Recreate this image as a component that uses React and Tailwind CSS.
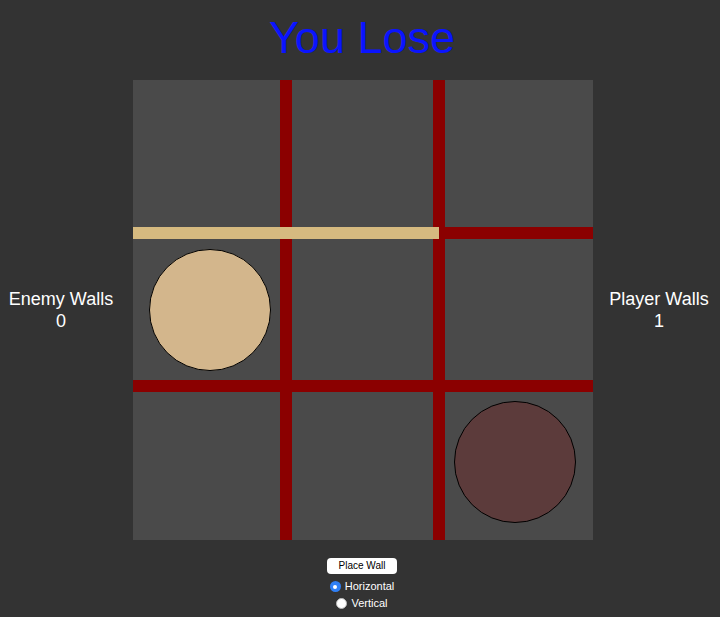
import React, { useState } from 'react';

const Cell = ({ children, className = '' }) => (
    <div className={`bg-[#4a4a4a] ${className}`}>{children}</div>
);

const VWall = () => <div className="bg-[#8b0000]" />;

const Pawn = ({ color }) => (
    <div className={`w-[122px] h-[122px] rounded-full border border-black ${color}`} />
);

const Radio = ({ checked, label, onClick }) => (
    <button
        type="button"
        onClick={onClick}
        className="flex items-center gap-[4px] h-[17px] text-[11px] text-white leading-none"
    >
        {checked ? (
            <span className="w-[11px] h-[11px] rounded-full bg-[#2f7ff5] flex items-center justify-center">
                <span className="w-[4px] h-[4px] rounded-full bg-white" />
            </span>
        ) : (
            <span className="w-[11px] h-[11px] rounded-full bg-white border border-[#bbbbbb]" />
        )}
        <span>{label}</span>
    </button>
);

export default function App() {
    const [orientation, setOrientation] = useState('horizontal');

    return (
        <div className="w-[720px] h-[617px] bg-[#333333] overflow-hidden font-['Liberation_Sans',Arial,sans-serif]">
            <h1 className="pt-[15px] h-[60px] text-center text-[45px] leading-[45px] text-[#0a14ff] pl-[4px]">
                You Lose
            </h1>
            <div className="mt-[20px] flex items-center">
                <div className="w-[122px] text-center text-white text-[18px] leading-[22px]">
                    <div>Enemy Walls</div>
                    <div>0</div>
                </div>
                <div className="ml-[11px] w-[460px] h-[460px] grid grid-cols-[147px_12px_141px_12px_148px] grid-rows-[147px_12px_141px_12px_148px]">
                    <Cell />
                    <VWall />
                    <Cell />
                    <VWall />
                    <Cell />

                    <div className="col-span-5 bg-[#8b0000] flex">
                        <div className="w-[306px] h-full bg-[#d6ba80]" />
                    </div>

                    <Cell className="pl-[16px] pt-[10px]">
                        <Pawn color="bg-[#d3b68c]" />
                    </Cell>
                    <VWall />
                    <Cell />
                    <VWall />
                    <Cell />

                    <div className="col-span-5 bg-[#8b0000]" />

                    <Cell />
                    <VWall />
                    <Cell />
                    <VWall />
                    <Cell className="pl-[9px] pt-[9px]">
                        <Pawn color="bg-[#5c3b3b]" />
                    </Cell>
                </div>
                <div className="ml-[5px] w-[122px] text-center text-white text-[18px] leading-[22px]">
                    <div>Player Walls</div>
                    <div>1</div>
                </div>
            </div>
            <div className="mt-[18px] flex flex-col items-center pl-[4px]">
                <button
                    type="button"
                    className="w-[70px] h-[16px] bg-white rounded-[4px] text-black text-[10px] leading-none flex items-center justify-center"
                >
                    Place Wall
                </button>
                <div className="mt-[4px] flex flex-col items-center">
                    <Radio
                        checked={orientation === 'horizontal'}
                        label="Horizontal"
                        onClick={() => setOrientation('horizontal')}
                    />
                    <Radio
                        checked={orientation === 'vertical'}
                        label="Vertical"
                        onClick={() => setOrientation('vertical')}
                    />
                </div>
            </div>
        </div>
    );
}
